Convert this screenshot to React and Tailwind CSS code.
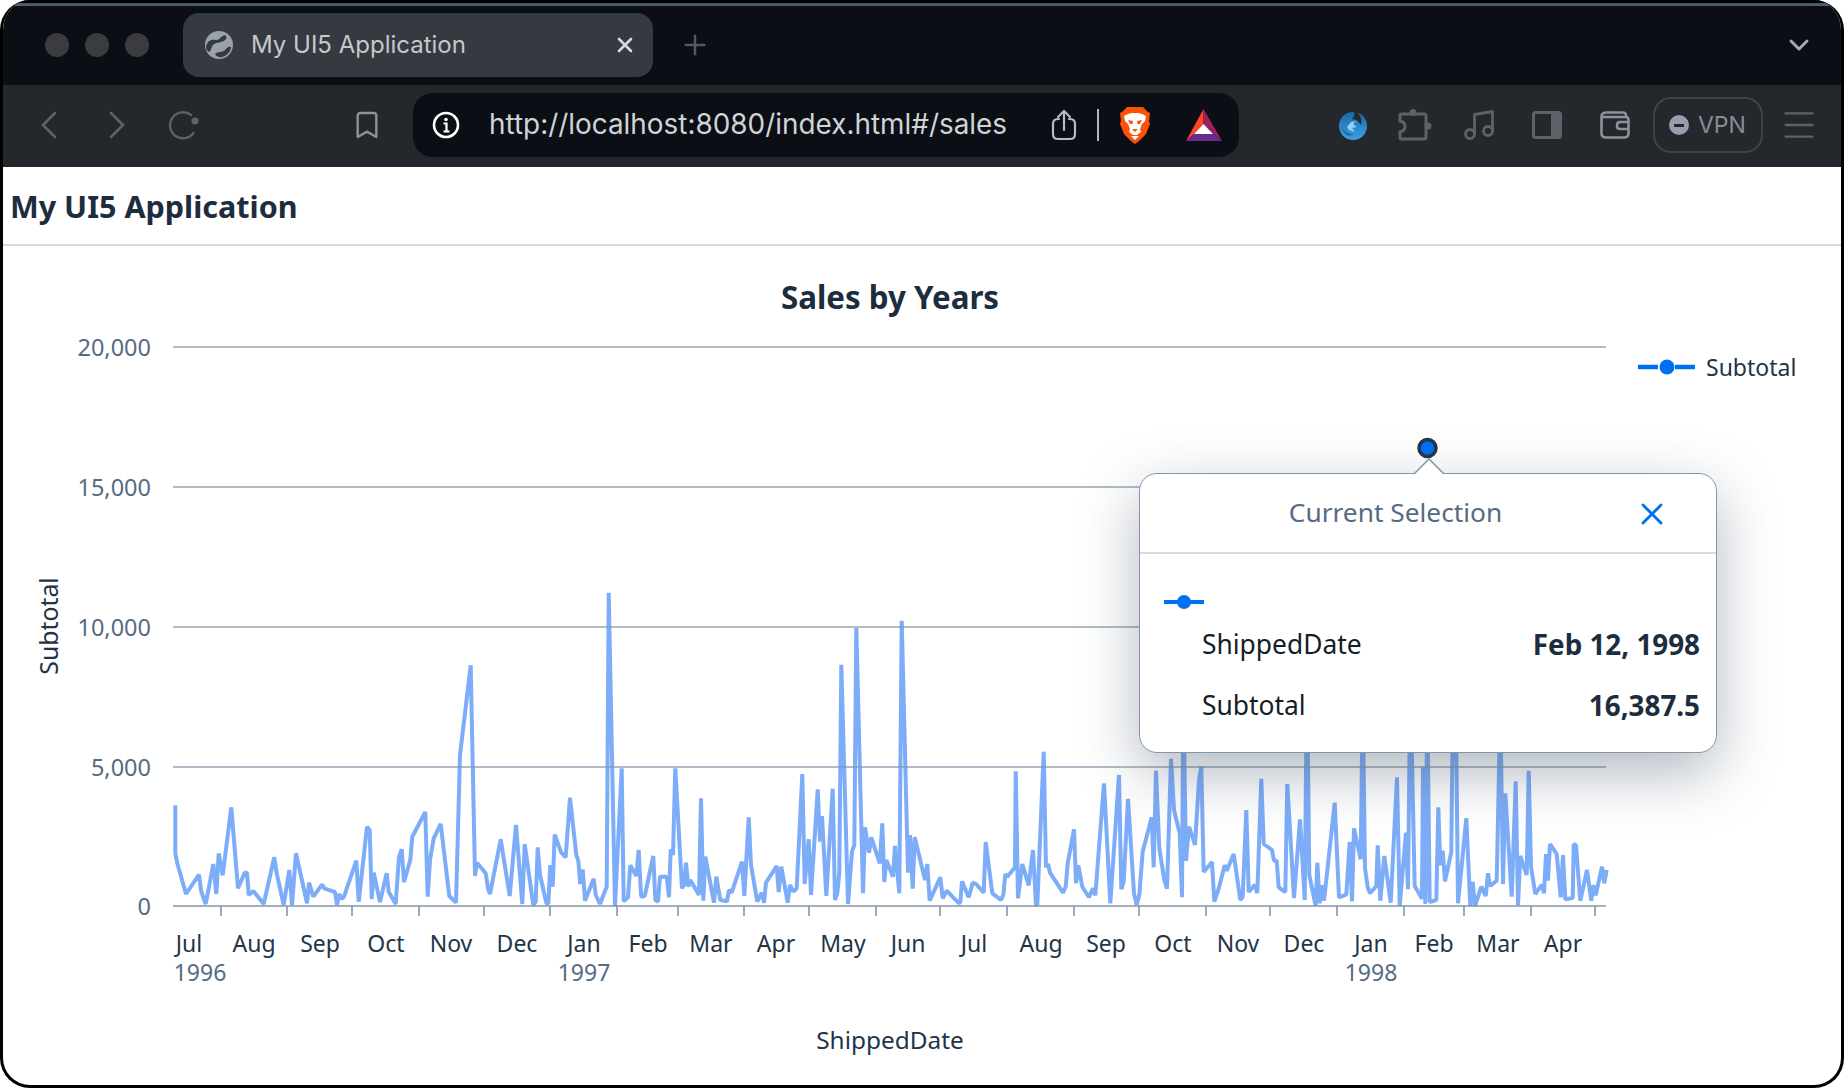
import React from 'react';
import { X, Plus, ChevronDown, Bookmark, Music, Menu } from 'lucide-react';

// traced from the reference, page coords = offset + zoomed / 3
const traceA = [[46,676],[46,820],[52,850],[78,942],[117,884],[124,935],[137,972],[160,852],[169,942],[176,820],[188,886],[214,682],[234,925],[254,878],[261,878],[266,945],[280,933],[311,972],[343,832],[350,880],[371,975],[388,870],[396,975],[408,820],[441,970],[447,908],[460,950],[486,914],[494,926],[525,936],[531,975],[538,942],[545,957],[552,950],[589,842],[596,965],[621,740],[629,750],[635,957],[641,878],[660,966],[680,880],[686,935],[707,972],[717,830],[725,808],[732,906],[751,840],[757,770],[796,696],[803,950],[810,840],[821,775],[842,732],[868,948],[888,968],[900,525],[932,256],[945,888],[951,848],[977,880],[984,925],[990,942],[1022,778],[1049,948],[1068,735],[1087,972],[1094,792],[1120,975],[1127,965],[1133,802],[1140,885],[1159,968],[1165,972],[1171,855],[1178,920],[1184,764],[1204,818],[1217,832],[1230,653],[1249,825],[1255,842],[1261,912],[1268,868],[1275,962],[1301,896],[1307,945],[1320,972],[1340,920],[1346,38],[1365,978],[1385,565],[1391,964],[1404,952],[1411,856],[1429,888],[1436,810]];
const traceB = [[3,945],[5,950],[14,948],[40,828],[46,960],[54,965],[60,890],[80,890],[87,952],[92,808],[99,825],[106,565],[126,925],[132,915],[138,848],[145,920],[151,900],[177,945],[183,655],[190,962],[196,830],[222,968],[229,890],[241,960],[261,964],[267,930],[275,938],[306,845],[313,948],[326,712],[333,855],[352,965],[365,938],[372,968],[378,908],[410,858],[416,936],[424,860],[443,968],[450,915],[460,935],[470,925],[487,582],[494,912],[506,778],[513,945],[533,628],[540,785],[546,708],[559,948],[578,626],[585,960],[592,940],[598,880],[604,254],[624,972],[636,815],[643,795],[649,144],[669,940],[675,742],[687,818],[694,772],[719,850],[727,730],[733,906],[739,840],[759,890],[765,798],[778,940],[785,122],[804,878],[810,765],[818,926],[824,772],[855,900],[862,852],[869,962],[901,892],[908,955],[920,932],[955,968],[961,968],[966,904],[986,952],[998,908],[1008,912],[1031,938],[1037,786],[1057,940],[1083,960],[1090,945],[1096,883],[1102,890],[1125,862],[1127,574],[1134,955],[1147,852],[1166,916],[1179,810],[1188,975],[1192,975],[1211,515],[1218,862],[1224,852],[1230,878],[1269,938],[1277,920],[1283,850],[1302,748],[1308,910],[1315,856],[1327,920],[1347,952],[1359,925],[1366,946],[1392,610],[1411,970],[1437,585]];
const traceC = [[4,448],[11,425],[24,177],[42,460],[50,495],[58,465],[68,335],[95,232],[101,382],[108,92],[118,325],[133,420],[141,446],[153,56],[162,210],[179,280],[186,472],[190,-150],[198,362],[207,260],[225,315],[237,120],[244,80],[251,396],[276,366],[283,485],[295,450],[314,376],[320,392],[341,342],[361,480],[368,470],[379,210],[386,456],[405,434],[412,460],[424,116],[431,312],[456,330],[462,362],[470,362],[476,442],[496,456],[502,132],[522,474],[540,238],[554,480],[561,-200],[568,405],[587,498],[592,368],[599,490],[606,436],[612,482],[644,188],[657,472],[679,464],[689,306],[696,484],[702,265],[722,358],[728,-130],[735,385],[743,442],[750,460],[769,438],[773,316],[781,482],[793,348],[812,488],[831,112],[839,498],[858,278],[864,448],[871,-180],[884,438],[906,476],[909,82],[916,492],[922,-120],[929,486],[949,480],[955,202],[961,376],[968,332],[975,424],[994,336],[1000,-200],[1007,-150],[1014,490],[1039,235],[1051,498],[1058,426],[1065,498],[1084,440],[1097,468],[1104,400],[1110,438],[1130,422],[1141,-100],[1149,432],[1156,160],[1175,470],[1187,124],[1194,496],[1201,348],[1220,405],[1226,92],[1233,380],[1246,462],[1266,434],[1272,460],[1278,342],[1284,422],[1290,312],[1310,342],[1322,472],[1329,345],[1336,478],[1358,474],[1361,312],[1368,316],[1381,482],[1401,390],[1414,482],[1420,436],[1427,466],[1446,380],[1453,430],[1460,390]];

const points = [
  ...traceA.map(([x, y]) => [160 + x / 3, 580 + y / 3]),
  ...traceB.map(([x, y]) => [640 + x / 3, 580 + y / 3]),
  ...traceC.map(([x, y]) => [1120 + x / 3, 740 + y / 3]),
].map(([x, y]) => `${x.toFixed(1)},${y.toFixed(1)}`).join(' ');

const gridLines = [
  { y: 347, label: '20,000' },
  { y: 487, label: '15,000' },
  { y: 627, label: '10,000' },
  { y: 767, label: '5,000' },
  { y: 906, label: '0' },
];
const ticks = [221, 287, 352, 419, 484, 550, 617, 678, 744, 809, 876, 940, 1007, 1074, 1139, 1206, 1270, 1337, 1404, 1464, 1531, 1595];
const months = [
  ['Jul', 189], ['Aug', 254], ['Sep', 320], ['Oct', 386], ['Nov', 451], ['Dec', 517], ['Jan', 584], ['Feb', 648],
  ['Mar', 711], ['Apr', 776], ['May', 843], ['Jun', 908], ['Jul', 974], ['Aug', 1041], ['Sep', 1106], ['Oct', 1173],
  ['Nov', 1238], ['Dec', 1304], ['Jan', 1371], ['Feb', 1434], ['Mar', 1498], ['Apr', 1563],
];

const Chart = () => (
  <svg viewBox="3 246 1838 839" className="block w-full h-full" style={{ fontFamily: '"Noto Sans", sans-serif' }}>
    <text x="890" y="296.5" dominantBaseline="central" textAnchor="middle" fontSize="31.3" fontWeight="700" fill="#1d2d3e">Sales by Years</text>
    {gridLines.map((g) => (
      <text key={g.y} x="151" y={g.y} dominantBaseline="central" textAnchor="end" fontSize="23.5" fill="#556b82">{g.label}</text>
    ))}
    <polyline points={points} fill="none" stroke="#0a62f2" strokeOpacity="0.53" strokeWidth="4" strokeLinejoin="bevel" />
    {gridLines.map((g) => (
      <line key={g.y} x1="173" x2="1606" y1={g.y} y2={g.y} stroke="#8396a8" strokeOpacity={g.y === 906 ? 1 : 0.85} strokeWidth="1.6" />
    ))}
    {ticks.map((x) => (
      <line key={x} x1={x} x2={x} y1="906" y2="916" stroke="#8396a8" strokeWidth="1.6" />
    ))}
    {months.map(([m, x], i) => (
      <text key={i} x={x} y="943" dominantBaseline="central" textAnchor="middle" fontSize="23" fill="#223548">{m}</text>
    ))}
    <text x="200" y="972" dominantBaseline="central" textAnchor="middle" fontSize="23" fill="#556b82">1996</text>
    <text x="584" y="972" dominantBaseline="central" textAnchor="middle" fontSize="23" fill="#556b82">1997</text>
    <text x="1371" y="972" dominantBaseline="central" textAnchor="middle" fontSize="23" fill="#556b82">1998</text>
    <text x="890" y="1039" dominantBaseline="central" textAnchor="middle" fontSize="24.4" fill="#223548">ShippedDate</text>
    <text transform="translate(48 626) rotate(-90)" dominantBaseline="central" textAnchor="middle" fontSize="24.8" fill="#223548">Subtotal</text>
    <line x1="1638" x2="1658" y1="367" y2="367" stroke="#0070f2" strokeWidth="4.5" />
    <line x1="1675" x2="1695" y1="367" y2="367" stroke="#0070f2" strokeWidth="4.5" />
    <circle cx="1667" cy="367" r="7.5" fill="#0070f2" />
    <text x="1706" y="367" dominantBaseline="central" fontSize="23" fill="#223548">Subtotal</text>
    <circle cx="1427.5" cy="448" r="8.5" fill="#0070f2" stroke="#223548" strokeWidth="3.5" />
  </svg>
);

const Popover = () => (
  <div className="absolute left-[1136px] top-[227px] w-[578px] h-[280px] bg-white rounded-[18px] border-[1.5px] border-[#8396a8] shadow-[0_20px_60px_rgba(70,85,105,0.42)] font-['Noto_Sans',sans-serif]">
    <svg className="absolute left-[272px] top-[-16px]" width="34" height="17" viewBox="0 0 34 17">
      <path d="M2 16 L17 1 L32 16" fill="#fff" stroke="#8396a8" strokeWidth="1.5" />
    </svg>
    <div className="relative flex items-center justify-center h-[80px] border-b-2 border-[#d9d9d9]">
      <span className="text-[26.3px] text-[#556b82] ml-[-65px]">Current Selection</span>
      <X className="absolute left-[494px] top-[22px] text-[#0070f2]" size={36} strokeWidth={1.9} />
    </div>
    <div className="pl-[24px] pr-[16px] pt-[39px]">
      <div className="relative h-[18px] w-[40px] flex items-center">
        <div className="w-full h-[4px] bg-[#0070f2]" />
        <div className="absolute left-[13px] w-[14px] h-[14px] rounded-full bg-[#0070f2]" />
      </div>
      <div className="flex items-center justify-between h-[62px] pl-[38px] mt-[3px] text-[26.4px] text-[#131e29]">
        <span>ShippedDate</span>
        <span className="font-bold text-[27.8px] text-[#1d2d3e]">Feb 12, 1998</span>
      </div>
      <div className="flex items-center justify-between h-[60px] pl-[38px] text-[26.4px] text-[#131e29]">
        <span>Subtotal</span>
        <span className="font-bold text-[27.8px] text-[#1d2d3e]">16,387.5</span>
      </div>
    </div>
  </div>
);

const Lion = () => (
  <svg width="32" height="37" viewBox="0 0 32 37">
    <path d="M8 0 H24 L29 5 L31 6 L30 14 L31 17 L27 27 L20 34 L16 37 L12 34 L5 27 L1 17 L2 14 L1 6 L3 5 Z" fill="#fb5208" />
    <path d="M9 7 L13 6 H19 L23 7 L27 9 L26 14 L23 17 L21 22 L22 25 L18 28 H14 L10 25 L11 22 L9 17 L6 14 L5 9 Z" fill="#fff" />
    <path d="M9 13 L14 14 L13.5 17 L11 17 Z M23 13 L18 14 L18.5 17 L21 17 Z M13 22 H19 L16 25 Z" fill="#fb5208" />
    <path d="M12 29 H20 L16 33 Z" fill="#fff" />
  </svg>
);

const Bat = () => (
  <svg width="36" height="32" viewBox="0 0 36 32">
    <path d="M17.5 0 L0 32 L8 25 L17.5 15 Z" fill="#ff4724" />
    <path d="M17.5 0 L36 32 L27 25 L17.5 15 Z" fill="#9e1f63" />
    <path d="M0 32 L8 25 H27 L36 32 Z" fill="#662d91" />
    <path d="M17.5 15 L27 25 H8 Z" fill="#fff" />
  </svg>
);

const Phoenix = () => (
  <svg width="30" height="30" viewBox="0 0 30 30">
    <defs>
      <linearGradient id="phx" x1="0" y1="0" x2="0" y2="1">
        <stop offset="0" stopColor="#1c68a8" />
        <stop offset="1" stopColor="#3aa2e2" />
      </linearGradient>
    </defs>
    <circle cx="15" cy="16" r="14" fill="url(#phx)" />
    <path d="M16 0 C21 3 25 8 23 15 C21 11 18 9 14 9 C16 7 17 4 16 0 Z" fill="#24282c" />
    <path d="M9 17 L13 12 L18 11 L15 14 L19 17 L14 18 L17 22 L11 20 Z" fill="#8fd0f5" />
    <path d="M3 15 C5 21 10 25 16 24 C12 27 6 26 3 15 Z" fill="#165c99" />
  </svg>
);

const App = () => (
  <div className="w-[1844px] h-[1088px] bg-white">
    <div className="w-full h-full flex flex-col bg-white border-[3px] border-t-0 border-black rounded-[30px] overflow-hidden">
      <div className="h-[85px] shrink-0 flex flex-col bg-[#0b0e14]">
        <div className="h-[3px] bg-black" />
        <div className="h-[2px] bg-[#3e5a72]" />
        <div className="h-[1px] bg-[#5a6068]" />
        <div className="flex-1 flex items-center pb-[1px]">
          <div className="flex gap-[16px] ml-[42px]">
            <div className="w-[24px] h-[24px] rounded-full bg-[#3a3c3f]" />
            <div className="w-[24px] h-[24px] rounded-full bg-[#3a3c3f]" />
            <div className="w-[24px] h-[24px] rounded-full bg-[#3a3c3f]" />
          </div>
          <div className="ml-[34px] w-[470px] h-[64px] rounded-[16px] bg-[#343a40] flex items-center pl-[21px] pr-[16px]">
            <svg width="30" height="30" viewBox="0 0 30 30">
              <circle cx="15" cy="15" r="14" fill="#9aa1a8" />
              <path d="M2 17 C3 11 7 9 12 10 C15 10.5 17 6 21 5 C23 7 23 9 21 10 C18 13 13 12 10 14 C7 16 8 20 5 22 C3 21 2 19 2 17 Z" fill="#343a40" />
              <path d="M11 24 C14 21 18 23 21 20 C23 18 24 16 27 17 C27 21 23 26 18 27 C15 28 12 26 11 24 Z" fill="#343a40" />
            </svg>
            <span className="ml-[17px] flex-1 text-[24px] text-[#c5c8cc] font-['Inter',sans-serif]">My UI5 Application</span>
            <X className="text-[#d8dadd]" size={24} strokeWidth={2.6} />
          </div>
          <Plus className="ml-[26px] text-[#53585e]" size={32} strokeWidth={1.9} />
          <ChevronDown className="ml-auto mr-[26px] text-[#a4abb2]" size={32} strokeWidth={2.2} />
        </div>
      </div>

      <div className="h-[82px] shrink-0 flex items-center pb-[2px] bg-[#24282c] font-['Inter',sans-serif]">
        <svg className="ml-[38px]" width="16" height="28" viewBox="0 0 16 28" fill="none" stroke="#5c6268" strokeWidth="2.6" strokeLinecap="round">
          <path d="M14 2 L2 14 L14 26" />
        </svg>
        <svg className="ml-[52px]" width="16" height="28" viewBox="0 0 16 28" fill="none" stroke="#5c6268" strokeWidth="2.6" strokeLinecap="round">
          <path d="M2 2 L14 14 L2 26" />
        </svg>
        <svg className="ml-[43px]" width="34" height="34" viewBox="0 0 34 34" fill="none">
          <path d="M23 7 A13 13 0 1 0 25.5 25" stroke="#5c6268" strokeWidth="2.4" strokeLinecap="round" />
          <circle cx="27" cy="13" r="3.6" fill="#5c6268" />
        </svg>
        <Bookmark className="ml-[149px] text-[#8b9299]" size={32} strokeWidth={1.8} />
        <div className="ml-[30px] w-[826px] h-[64px] rounded-[20px] bg-[#0b0e14] flex items-center pl-[18px] pr-[17px]">
          <svg width="30" height="30" viewBox="0 0 30 30" fill="none">
            <circle cx="15" cy="15" r="12" stroke="#fff" strokeWidth="2.6" />
            <circle cx="15" cy="9.5" r="1.8" fill="#fff" />
            <path d="M12.5 13.5 H15.5 V21 M12.5 21.5 H18.5" stroke="#fff" strokeWidth="2.2" />
          </svg>
          <span className="ml-[28px] text-[27.9px] text-[#d0d3d6] whitespace-nowrap">http://localhost:8080/index.html#/sales</span>
          <svg className="ml-auto" width="26" height="32" viewBox="0 0 26 32" fill="none" stroke="#b8bbbf" strokeWidth="2.2" strokeLinecap="round">
            <path d="M8 10 H7 Q2 10 2 15 V25 Q2 30 7 30 H19 Q24 30 24 25 V15 Q24 10 19 10 H18 M13 21 V2 M7 8 L13 2 L19 8" />
          </svg>
          <div className="ml-[20px] w-[2px] h-[32px] bg-[#b4b7ba]" />
          <div className="ml-[20px]"><Lion /></div>
          <div className="ml-[35px]"><Bat /></div>
        </div>
        <div className="ml-[99px]"><Phoenix /></div>
        <svg className="ml-[30px]" width="34" height="32" viewBox="0 0 34 32" fill="none" stroke="#5c6268" strokeWidth="3">
          <path d="M3.5 5 H26.5 Q28 5 28 6.5 V28.5 Q28 30 26.5 30 H3.5 Q2 30 2 28.5 V23 Q7 22 7 17 Q7 13 2 12 V6.5 Q2 5 3.5 5 Z" />
          <circle cx="15" cy="3.5" r="3.5" fill="#5c6268" stroke="none" />
          <circle cx="30" cy="17" r="3.5" fill="#5c6268" stroke="none" />
        </svg>
        <Music className="ml-[29px] text-[#5c6268]" size={36} strokeWidth={1.9} />
        <svg className="ml-[35px]" width="30" height="28" viewBox="0 0 30 28">
          <rect x="1.5" y="1.5" width="27" height="25" rx="2" fill="none" stroke="#5c6268" strokeWidth="3" />
          <rect x="19" y="1.5" width="9.5" height="25" fill="#5c6268" />
        </svg>
        <svg className="ml-[38px]" width="30" height="28" viewBox="0 0 30 28" fill="none" stroke="#8b9299" strokeWidth="2.6">
          <path d="M26 6 V4.5 Q26 1.5 23 1.5 H6 Q1.5 1.5 1.5 6 V22 Q1.5 26.5 6 26.5 H24 Q28.5 26.5 28.5 22 V9 Q28.5 6 26 6 H2" />
          <path d="M28.5 11 H20 Q17 11 17 14 V15 Q17 18 20 18 H28.5" />
        </svg>
        <div className="ml-[23px] w-[110px] h-[56px] rounded-[18px] border-2 border-[#3e4349] flex items-center pl-[14px]">
          <div className="w-[20px] h-[20px] rounded-full bg-[#9a9cb0] flex items-center justify-center">
            <div className="w-[10px] h-[3px] bg-[#24282c]" />
          </div>
          <span className="ml-[9px] text-[23px] text-[#878d94]">VPN</span>
        </div>
        <Menu className="ml-[16px] text-[#5c6268]" size={40} strokeWidth={1.4} />
      </div>

      <div className="h-[79px] shrink-0 flex items-center pl-[7px] pt-[2px] border-b-2 border-[#d9d9d9] text-[30.5px] font-bold text-[#1d2d3e] font-['Noto_Sans',sans-serif]">
        My UI5 Application
      </div>

      <div className="relative flex-1 min-h-0">
        <Chart />
        <Popover />
      </div>
    </div>
  </div>
);

export default App;
